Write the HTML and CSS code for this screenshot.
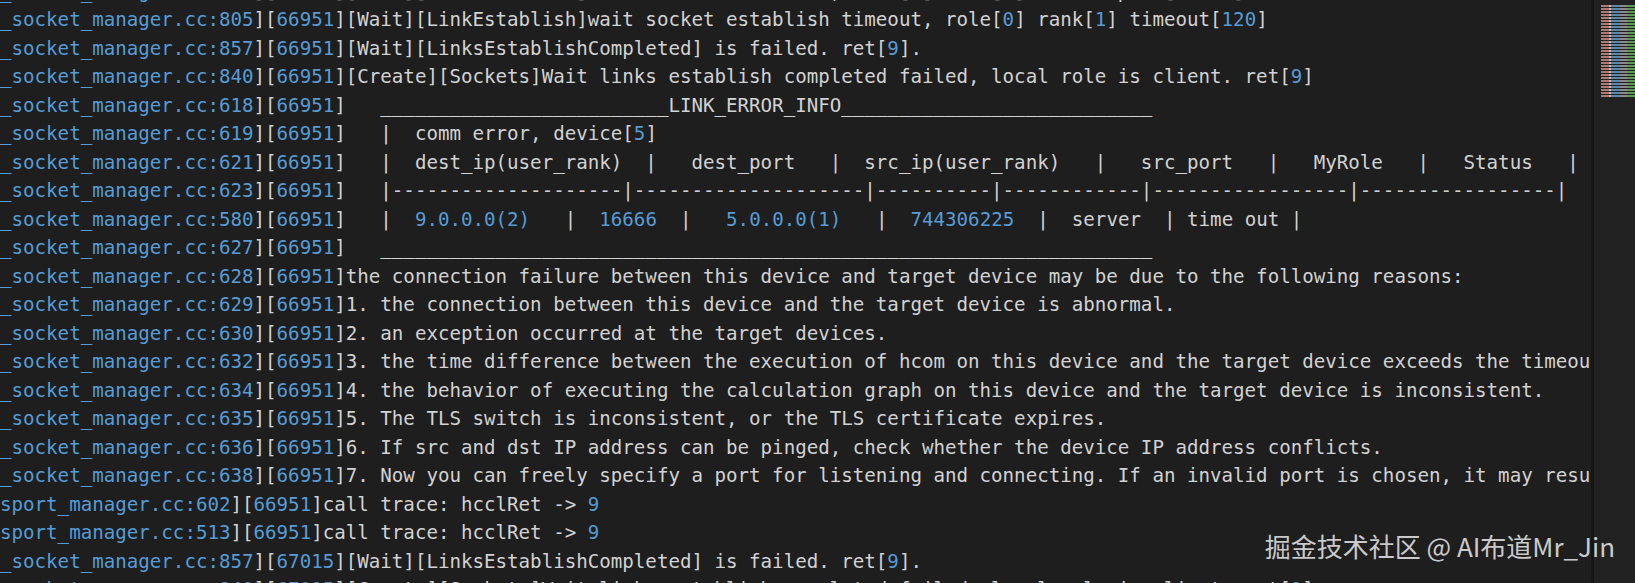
FILE: index.html
```html
<!DOCTYPE html>
<html lang="en">
<head>
<meta charset="utf-8">
<title>log</title>
<link rel="stylesheet" href="styles.css">
</head>
<body>
<div class="screen">
  <div class="editor">
    <div class="code">
<div class="ln"><span class="b">_socket_manager.cc:798</span>][<span class="b">66951</span>][Wait][LinkEstablish]wait socket establish, role[<span class="b">0</span>] rank[<span class="b">1</span>] listen port[<span class="b">16666</span>]</div>
<div class="ln"><span class="b">_socket_manager.cc:805</span>][<span class="b">66951</span>][Wait][LinkEstablish]wait socket establish timeout, role[<span class="b">0</span>] rank[<span class="b">1</span>] timeout[<span class="b">120</span>]</div>
<div class="ln"><span class="b">_socket_manager.cc:857</span>][<span class="b">66951</span>][Wait][LinksEstablishCompleted] is failed. ret[<span class="b">9</span>].</div>
<div class="ln"><span class="b">_socket_manager.cc:840</span>][<span class="b">66951</span>][Create][Sockets]Wait links establish completed failed, local role is client. ret[<span class="b">9</span>]</div>
<div class="ln"><span class="b">_socket_manager.cc:618</span>][<span class="b">66951</span>]   _________________________LINK_ERROR_INFO___________________________</div>
<div class="ln"><span class="b">_socket_manager.cc:619</span>][<span class="b">66951</span>]   |  comm error, device[<span class="b">5</span>]</div>
<div class="ln"><span class="b">_socket_manager.cc:621</span>][<span class="b">66951</span>]   |  dest_ip(user_rank)  |   dest_port   |  src_ip(user_rank)   |   src_port   |   MyRole   |   Status   |</div>
<div class="ln"><span class="b">_socket_manager.cc:623</span>][<span class="b">66951</span>]   |--------------------|--------------------|----------|------------|-----------------|-----------------|</div>
<div class="ln"><span class="b">_socket_manager.cc:580</span>][<span class="b">66951</span>]   |  <span class="b">9.0.0.0(2)</span>   |  <span class="b">16666</span>  |   <span class="b">5.0.0.0(1)</span>   |  <span class="b">744306225</span>  |  server  | time out |</div>
<div class="ln"><span class="b">_socket_manager.cc:627</span>][<span class="b">66951</span>]   ___________________________________________________________________</div>
<div class="ln"><span class="b">_socket_manager.cc:628</span>][<span class="b">66951</span>]the connection failure between this device and target device may be due to the following reasons:</div>
<div class="ln"><span class="b">_socket_manager.cc:629</span>][<span class="b">66951</span>]1. the connection between this device and the target device is abnormal.</div>
<div class="ln"><span class="b">_socket_manager.cc:630</span>][<span class="b">66951</span>]2. an exception occurred at the target devices.</div>
<div class="ln"><span class="b">_socket_manager.cc:632</span>][<span class="b">66951</span>]3. the time difference between the execution of hcom on this device and the target device exceeds the timeout threshold.</div>
<div class="ln"><span class="b">_socket_manager.cc:634</span>][<span class="b">66951</span>]4. the behavior of executing the calculation graph on this device and the target device is inconsistent.</div>
<div class="ln"><span class="b">_socket_manager.cc:635</span>][<span class="b">66951</span>]5. The TLS switch is inconsistent, or the TLS certificate expires.</div>
<div class="ln"><span class="b">_socket_manager.cc:636</span>][<span class="b">66951</span>]6. If src and dst IP address can be pinged, check whether the device IP address conflicts.</div>
<div class="ln"><span class="b">_socket_manager.cc:638</span>][<span class="b">66951</span>]7. Now you can freely specify a port for listening and connecting. If an invalid port is chosen, it may result in a conflict.</div>
<div class="ln"><span class="b">sport_manager.cc:602</span>][<span class="b">66951</span>]call trace: hcclRet -&gt; <span class="b">9</span></div>
<div class="ln"><span class="b">sport_manager.cc:513</span>][<span class="b">66951</span>]call trace: hcclRet -&gt; <span class="b">9</span></div>
<div class="ln"><span class="b">_socket_manager.cc:857</span>][<span class="b">67015</span>][Wait][LinksEstablishCompleted] is failed. ret[<span class="b">9</span>].</div>
<div class="ln"><span class="b">_socket_manager.cc:840</span>][<span class="b">67015</span>][Create][Sockets]Wait links establish completed failed, local role is client. ret[<span class="b">9</span>]</div>
    </div>
  </div>
  <div class="side">
    <div class="shadow"></div>
    <div class="minimap">
      <div class="stripe red"></div>
      <div class="stripe white"></div>
      <div class="stripe blue"></div>
      <div class="stripe grey"></div>
      <div class="stripe green"></div>
    </div>
  </div>
  <div class="watermark">掘金技术社区 @ AI布道Mr_Jin</div>
</div>
</body>
</html>
```

FILE: styles.css
```css
html, body {
  margin: 0;
  padding: 0;
  background: #1e1e1e;
  overflow: hidden;
}

.screen {
  position: relative;
  width: 1635px;
  height: 583px;
  display: flex;
  overflow: hidden;
  background: #1e1e1e;
}

.editor {
  width: 1591px;
  flex: none;
  overflow: hidden;
}

.code {
  margin-top: -22.5px;
  font-family: "DejaVu Sans Mono", "Liberation Mono", monospace;
  font-size: 19.15px;
  line-height: 28.5px;
  color: #d2d2d2;
}

.ln {
  white-space: pre;
  height: 28.5px;
}

.b {
  color: #569cd6;
}

.side {
  flex: 1;
  display: flex;
  background: #212121;
}

.shadow {
  width: 3px;
  background: #141414;
  flex: none;
}

.minimap {
  display: flex;
  margin: 5px 0 0 7px;
  height: 93px;
}

.stripe {
  height: 100%;
  background-image: repeating-linear-gradient(to bottom, var(--c) 0, var(--c) 2px, transparent 2px, transparent 3px);
}

.red { width: 8px; --c: #b07a72; }
.white { width: 2px; --c: #bdbdbd; }
.blue { width: 9px; --c: #5a88b0; }
.grey { width: 7px; --c: #8a8a8a; }
.green { width: 8px; --c: #5d9a56; }

.watermark {
  position: absolute;
  right: 20px;
  bottom: 22px;
  font-family: "Noto Sans CJK SC", "Noto Sans", sans-serif;
  font-size: 26px;
  line-height: 30px;
  color: rgba(235, 235, 235, 0.85);
  white-space: nowrap;
}
```
